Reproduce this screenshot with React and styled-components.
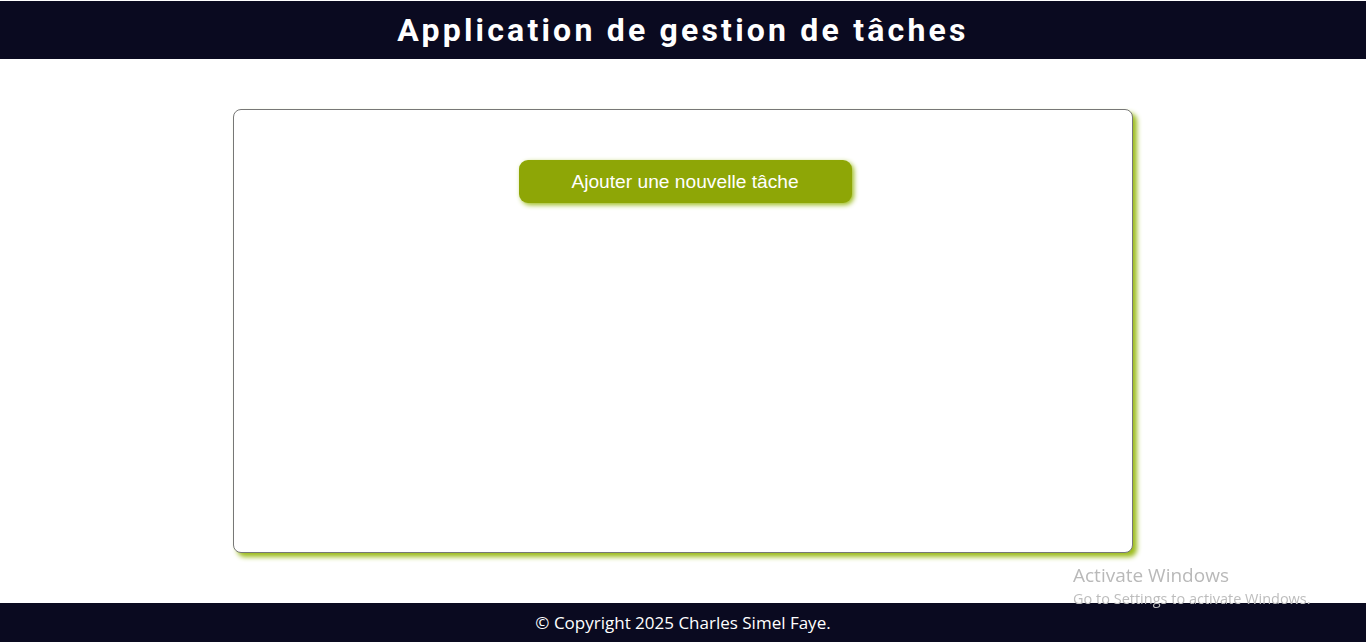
import React from "react";
import styled, { createGlobalStyle } from "styled-components";

const Global = createGlobalStyle`
  html, body { margin: 0; padding: 0; background: #ffffff; }
  body { font-family: Roboto, "Liberation Sans", sans-serif; }
  * { box-sizing: border-box; }
`;

const Page = styled.div`
  min-height: 642px;
  padding-top: 1px;
  display: flex;
  flex-direction: column;
`;

const Header = styled.header`
  height: 58px;
  background: #0a0a20;
  display: flex;
  align-items: center;
  justify-content: center;
`;

const Title = styled.h1`
  margin: 0;
  color: #ffffff;
  font-family: Roboto, "Liberation Sans", sans-serif;
  font-weight: 700;
  font-size: 32px;
  letter-spacing: 3.2px;
`;

const Main = styled.main`
  flex: 1;
  display: flex;
  justify-content: center;
  padding: 50px 0;
`;

const Card = styled.section`
  width: 900px;
  height: 444px;
  border: 1px solid #777777;
  border-radius: 8px;
  background: #ffffff;
  box-shadow: 4px 4px 5px #9cbc1c;
  display: flex;
  flex-direction: column;
  align-items: center;
  padding-top: 50px;
`;

const AddButton = styled.button`
  width: 333px;
  height: 43px;
  margin-left: 4px;
  padding: 0;
  border: none;
  border-radius: 9px;
  background: #8ea606;
  color: #ffffff;
  font-family: "Liberation Sans", Arial, sans-serif;
  font-size: 19.2px;
  box-shadow: 2px 2px 5px #9cbc1c;
  cursor: pointer;
`;

const Footer = styled.footer`
  height: 39px;
  background: #0a0a20;
  display: flex;
  align-items: center;
  justify-content: center;
`;

const FooterText = styled.p`
  margin: 0;
  color: #ffffff;
  font-family: "Open Sans", Lato, sans-serif;
  font-size: 17px;
`;

const Watermark = styled.div`
  position: fixed;
  left: 1073px;
  top: 564px;
  color: #b9b9b9;
  font-family: "Open Sans", "Noto Sans", sans-serif;
  pointer-events: none;
  line-height: 1.2;
`;

const WmTitle = styled.div`
  font-size: 19px;
`;

const WmSub = styled.div`
  font-size: 14.5px;
  margin-top: 3px;
  color: #bdbdbd;
`;

export default function App() {
  return (
    <>
      <Global />
      <Page>
        <Header>
          <Title>Application de gestion de tâches</Title>
        </Header>
        <Main>
          <Card>
            <AddButton>Ajouter une nouvelle tâche</AddButton>
          </Card>
        </Main>
        <Footer>
          <FooterText>© Copyright 2025 Charles Simel Faye.</FooterText>
        </Footer>
      </Page>
      <Watermark>
        <WmTitle>Activate Windows</WmTitle>
        <WmSub>Go to Settings to activate Windows.</WmSub>
      </Watermark>
    </>
  );
}
